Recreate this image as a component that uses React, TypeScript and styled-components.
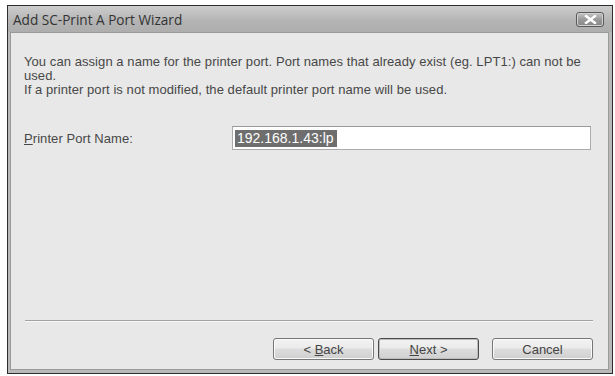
import styled, { createGlobalStyle } from "styled-components"

const GlobalStyle = createGlobalStyle`
   html, body {
      margin: 0;
      padding: 0;
      background: #ffffff;
   }
   body {
      font-family: "Liberation Sans", Arial, sans-serif;
   }
`

export default function App() {
   return (
      <>
         <GlobalStyle/>
         <Window>
            <TitleBar>
               <Title>Add SC-Print A Port Wizard</Title>
               <CloseButton aria-label="Close">
                  <svg width="13" height="9" viewBox="0 0 13 9">
                     <path d="M2 1 L11 8 M11 1 L2 8" stroke="#ffffff" strokeWidth="2.4" strokeLinecap="square"/>
                  </svg>
               </CloseButton>
            </TitleBar>
            <Body>
               <Intro>
                  You can assign a name for the printer port. Port names that already exist (eg. LPT1:) can not be used.
                  <br/>
                  If a printer port is not modified, the default printer port name will be used.
               </Intro>
               <FieldRow>
                  <Label><u>P</u>rinter Port Name:</Label>
                  <TextBox>
                     <Selected>192.168.1.43:lp</Selected>
                  </TextBox>
               </FieldRow>
               <Spacer/>
               <Separator/>
               <ButtonRow>
                  <Button><span>&lt; <u>B</u>ack</span></Button>
                  <Button primary><span><u>N</u>ext &gt;</span></Button>
                  <Button gap><span>Cancel</span></Button>
               </ButtonRow>
            </Body>
         </Window>
      </>
   )
}

const Window = styled.div`
   width: 606px;
   height: 369px;
   margin: 5px 0 0 7px;
   box-sizing: border-box;
   border: 1px solid #2e2e2e;
   background: #b9b9b9;
   display: flex;
   flex-direction: column;
`

const TitleBar = styled.div`
   height: 25px;
   display: flex;
   align-items: center;
   justify-content: space-between;
   padding: 1px 8px 0 5px;
   background: linear-gradient(#cdcdcd, #b3b3b3 60%, #aeaeae);
`

const Title = styled.div`
   font-family: "Open Sans", "Noto Sans", sans-serif;
   font-size: 13.6px;
   color: #333333;
`

const CloseButton = styled.div`
   width: 28px;
   height: 15px;
   margin-top: -1px;
   box-sizing: border-box;
   border: 1px solid #5a5a5a;
   border-radius: 3px;
   background: linear-gradient(#c4c4c4, #9a9a9a 50%, #858585);
   display: flex;
   align-items: center;
   justify-content: center;
   box-shadow: inset 0 0 0 1px #d0d0d0;
`

const Body = styled.div`
   flex: 1;
   margin: 0 3px 3px 2px;
   border: 1px solid #9a9a9a;
   background: #e8e8e8;
   display: flex;
   flex-direction: column;
   padding: 22px 15px 9px 13px;
   font-size: 13px;
   letter-spacing: 0.07px;
   color: #474747;
`

const Intro = styled.p`
   margin: 0;
   line-height: 14px;
`

const FieldRow = styled.div`
   display: flex;
   align-items: center;
   margin-top: 29px;
`

const Label = styled.div`
   width: 208px;
   u {
      text-decoration-thickness: 1px;
   }
`

const TextBox = styled.div`
   width: 359px;
   height: 24px;
   box-sizing: border-box;
   border: 1px solid #acacac;
   border-top-color: #9a9a9a;
   background: #ffffff;
   display: flex;
   align-items: center;
   padding-left: 2px;
`

const Selected = styled.span`
   background: #6e6e6e;
   color: #ffffff;
   font-size: 14px;
   letter-spacing: 0;
   line-height: 17px;
   padding: 0 3px 0 2px;
`

const Spacer = styled.div`
   flex: 1;
`

const Separator = styled.div`
   height: 1px;
   background: #a3a3a3;
   border-bottom: 1px solid #f7f7f7;
   margin-left: 1px;
`

const Button = styled.div<{ primary?: boolean; gap?: boolean }>`
   width: 101px;
   height: 22px;
   box-sizing: border-box;
   display: flex;
   align-items: center;
   justify-content: center;
   border: 1px solid ${p => p.primary ? "#4a4a4a" : "#777777"};
   border-radius: 3px;
   background: linear-gradient(#f2f2f2, #ebebeb 45%, #dddddd 50%, #cfcfcf);
   box-shadow: inset 0 0 0 1px ${p => p.primary ? "#bdbdbd" : "#fafafa"};
   color: #444444;
   font-size: 13px;
   letter-spacing: 0;
   margin-left: ${p => p.gap ? "9px" : "0"};
`

const ButtonRow = styled.div`
   display: flex;
   justify-content: flex-end;
   gap: 4px;
   margin-top: 16px;
`
